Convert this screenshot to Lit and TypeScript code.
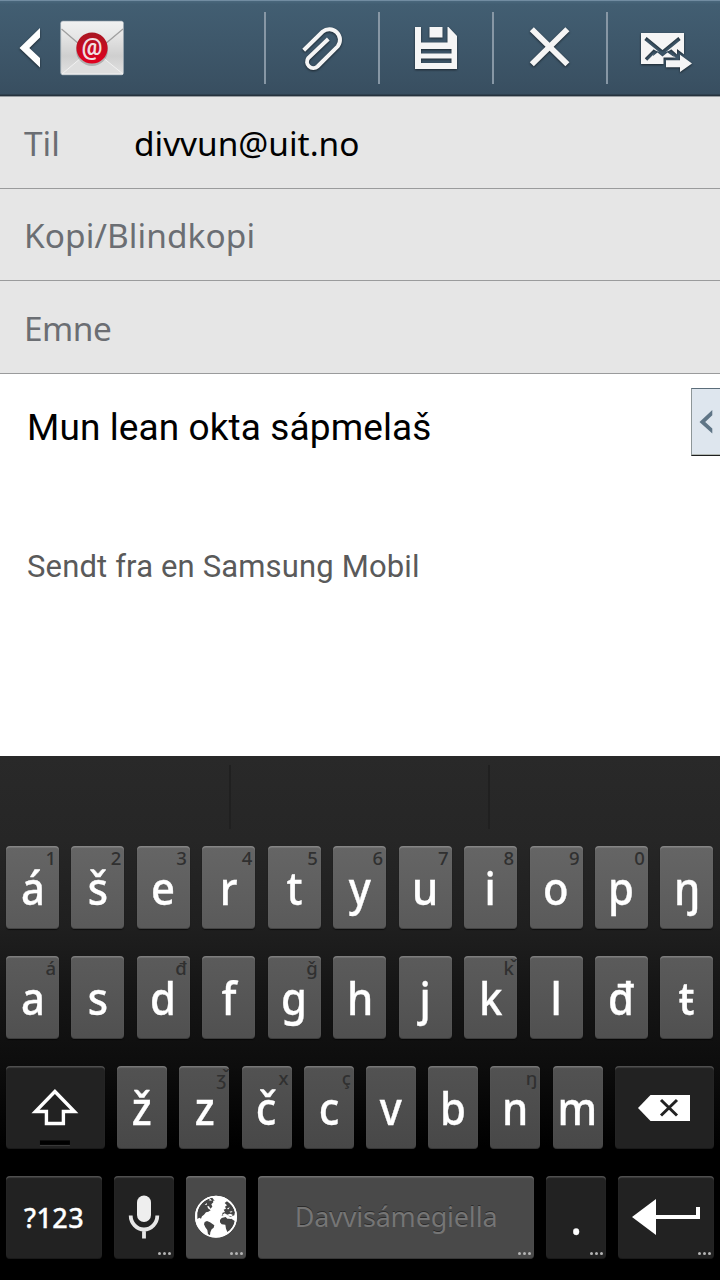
import { LitElement, html, css } from "lit";
import { customElement, property } from "lit/decorators.js";

@customElement("mail-header")
class MailHeader extends LitElement {
  static styles = css`
    :host {
      display: flex;
      box-sizing: border-box;
      height: 97px;
      border-top: 1px solid #718ca1;
      border-bottom: 1px solid #979ca0;
      background: linear-gradient(#4a687d 0, #425e72 3px, #3a5163 80px, #384e60 93px, #26323d 94px, #26323d 95px);
    }
    .home {
      width: 264px;
      flex: none;
    }
    .action {
      flex: none;
      display: flex;
      width: 114px;
      padding-top: 11px;
    }
    .action::before {
      content: "";
      width: 2px;
      height: 72px;
      background: #8797a5;
    }
    svg {
      display: block;
    }
    .action svg {
      margin-top: -12px;
    }
    .action svg,
    .chev {
      filter: drop-shadow(0 1px 1px rgba(0, 0, 0, 0.55));
    }
    .at {
      font: 700 23px Roboto, sans-serif;
    }
  `;
  render() {
    return html`
      <div class="home">
        <svg width="264" height="94" viewBox="0 1 264 94">
          <defs>
            <linearGradient id="paper" x1="0" y1="0" x2="0" y2="1">
              <stop offset="0" stop-color="#f4f4f4" />
              <stop offset=".65" stop-color="#cfcfcf" />
              <stop offset="1" stop-color="#e2e2e2" />
            </linearGradient>
            <linearGradient id="flap" x1="0" y1="0" x2="0" y2="1">
              <stop offset="0" stop-color="#f0f1f1" />
              <stop offset="1" stop-color="#dcdcdc" />
            </linearGradient>
            <linearGradient id="seal" x1="0" y1="0" x2="0" y2="1">
              <stop offset="0" stop-color="#a81722" />
              <stop offset="1" stop-color="#e3001f" />
            </linearGradient>
          </defs>
          <path class="chev" d="M19.5 48 40 28V37.5L29.3 48 40 58V67.5Z" fill="#fff" />
          <rect x="60.7" y="21.2" width="62.8" height="53.6" rx="2" fill="url(#paper)" stroke="#9aa7b1" stroke-width=".8" />
          <path d="M62 74 88 52h8l27 22z" fill="#dedede" stroke="#f2f2f2" stroke-width="1" />
          <path d="M61.5 29 88 51h8l27-22V23q0-1.5-1.5-1.5H63q-1.5 0-1.5 1.5z" fill="url(#flap)" />
          <path d="M61.5 29 86 50M123 29 98 50" stroke="#a0a0a0" stroke-width="1.3" fill="none" />
          <circle cx="92" cy="50" r="16" fill="#000" opacity=".2" />
          <circle cx="92" cy="48" r="15.6" fill="url(#seal)" />
          <text class="at" x="92" y="54.5" text-anchor="middle" fill="#f1dfe1">@</text>
        </svg>
      </div>
      <div class="action">
        <svg width="112" height="94" viewBox="266 0 112 94">
          <path
            d="M303.7 50.3 322.5 31.8A10.6 10.6 0 0 1 337.8 46.3L317.5 66.5A6.3 6.3 0 0 1 308.3 58L328.3 39"
            fill="none" stroke="#f5f5f5" stroke-width="4"
          />
        </svg>
      </div>
      <div class="action">
        <svg width="112" height="94" viewBox="380 0 112 94">
          <path fill="#f5f5f5" fill-rule="evenodd"
            d="M415 27h6v15.5h26.5V27h1L457 36v33h-42zM421 49v4.5h30.5V49zM421 58.5V63h30.5V58.5z" />
          <rect x="429.5" y="27" width="13" height="10.5" fill="#f5f5f5" />
        </svg>
      </div>
      <div class="action">
        <svg width="112" height="94" viewBox="494 0 112 94">
          <path d="M531.8 29.2 567.4 64.2M567.4 29.2 531.8 64.2" stroke="#f5f5f5" stroke-width="5.8" />
        </svg>
      </div>
      <div class="action">
        <svg width="112" height="94" viewBox="608 0 112 94">
          <mask id="cut" maskUnits="userSpaceOnUse" x="636" y="28" width="60" height="50">
            <path d="M641 33h43v31h-43z" fill="#fff" />
            <path d="M645.5 38.5 662.5 52.5 679.5 38.5" fill="none" stroke="#000" stroke-width="3.6" />
            <path d="M646 59.5 655 50.5" fill="none" stroke="#000" stroke-width="3.4" />
            <path d="M679 58.5 670 50.5" fill="none" stroke="#000" stroke-width="3.4" />
            <path d="M654 50 662.5 53 671 50 674 57 667.5 52.5 662.5 56.5 657.5 52.5 653 56z" fill="#000" />
            <path d="M663.5 57.5H677V49L696 63.5 677 78V69.5H663.5z" fill="#000" />
          </mask>
          <rect x="641" y="33" width="43" height="31" fill="#f5f5f5" mask="url(#cut)" />
          <path d="M666 60.2h14v-5.4L692 63.5 680 72V67.2H666z" fill="#f5f5f5" />
        </svg>
      </div>
    `;
  }
}

@customElement("mail-form")
class MailForm extends LitElement {
  static styles = css`
    :host {
      display: block;
      height: 659px;
      background: #fff;
      color: #000;
    }
    .field {
      box-sizing: border-box;
      height: 92px;
      padding: 1px 0 0 24px;
      display: flex;
      align-items: center;
      background: #e6e6e6;
      border-bottom: 1px solid #9a9b9c;
      font: 400 33.4px/50px "Noto Sans", sans-serif;
      color: #6b6e73;
    }
    .field.last {
      height: 93px;
      padding-top: 1px;
      letter-spacing: -0.5px;
    }
    .wide {
      letter-spacing: 0.1px;
    }
    .til {
      width: 110px;
    }
    .value {
      color: #000;
    }
    .main {
      display: flex;
      justify-content: space-between;
      align-items: flex-start;
      padding: 14px 0 0 27px;
      height: 382px;
      box-sizing: border-box;
      font-family: Roboto, sans-serif;
    }
    .body {
      margin: 0;
      padding-top: 17px;
      font-size: 37px;
      line-height: 46px;
      letter-spacing: 0.1px;
    }
    .sign {
      margin: 96px 0 0;
      font-size: 31px;
      line-height: 40px;
      letter-spacing: 0.15px;
      color: #5a5a5a;
    }
    .handle {
      box-sizing: border-box;
      width: 29px;
      height: 68px;
      background: #dee6ee;
      border-top: 1px solid #5b6d7a;
      border-left: 1px solid #8d9698;
      border-bottom: 1px solid #1d1f20;
      box-shadow: inset 0 -1px 0 #b3b9b4;
    }
  `;
  render() {
    return html`
      <div class="field"><span class="til">Til</span><span class="value">divvun@uit.no</span></div>
      <div class="field"><span class="wide">Kopi/Blindkopi</span></div>
      <div class="field last"><span>Emne</span></div>
      <div class="main">
        <div>
          <p class="body">Mun lean okta sápmelaš</p>
          <p class="sign">Sendt fra en Samsung Mobil</p>
        </div>
        <div class="handle">
          <svg width="28" height="66" viewBox="0 0 28 66">
            <path d="M7.5 33 20.3 21V26.3L13.2 33 20.3 39.5V44.5z" fill="#5f7586" />
          </svg>
        </div>
      </div>
    `;
  }
}

@customElement("kb-key")
class KbKey extends LitElement {
  @property() label = "";
  @property() hint = "";
  @property({ type: Boolean }) more = false;
  static styles = css`
    :host {
      box-sizing: border-box;
      position: relative;
      display: flex;
      justify-content: center;
      height: 83px;
      flex: none;
      border-radius: 4px;
      background: var(--key, #4b4b4b);
      box-shadow: inset 0 2px 1px -0.5px rgba(255, 255, 255, 0.22), inset 0 -1px 0 rgba(0, 0, 0, 0.25),
        0 1px 1px rgba(0, 0, 0, 0.6);
      color: #fff;
      font-family: "Noto Sans", sans-serif;
    }
    .label {
      font-size: 45px;
      line-height: 83px;
      font-weight: 500;
      white-space: nowrap;
      transform: scaleX(0.93);
      -webkit-text-stroke: 0.35px #fff;
    }
    .hint {
      position: absolute;
      right: 3px;
      top: 0;
      font-size: 18.5px;
      line-height: 23px;
      font-weight: 500;
      color: #303030;
    }
    .mark {
      position: relative;
      top: -2px;
      display: inline-block;
      margin: 0 -4px 0 -4px;
      line-height: 0;
    }
    .dots {
      position: absolute;
      right: 3px;
      bottom: 4px;
      display: flex;
      gap: 2px;
    }
    .dots i {
      width: 3px;
      height: 3px;
      border-radius: 50%;
      background: #b4b4b4;
    }
  `;
  glyph(text: string) {
    return text.endsWith("ˇ") ? html`${text.slice(0, -1)}<span class="mark">ˇ</span>` : text;
  }
  render() {
    return html`
      ${this.label ? html`<span class="label">${this.label}</span>` : html`<slot></slot>`}
      ${this.hint ? html`<span class="hint">${this.glyph(this.hint)}</span>` : ""}
      ${this.more ? html`<span class="dots"><i></i><i></i><i></i></span>` : ""}
    `;
  }
}

const ROW1 = [["á", "1"], ["š", "2"], ["e", "3"], ["r", "4"], ["t", "5"], ["y", "6"], ["u", "7"], ["i", "8"], ["o", "9"], ["p", "0"], ["ŋ", ""]];
const ROW2 = [["a", "á"], ["s", ""], ["d", "đ"], ["f", ""], ["g", "ǧ"], ["h", ""], ["j", ""], ["k", "kˇ"], ["l", ""], ["đ", ""], ["ŧ", ""]];
const ROW3 = [["ž", ""], ["z", "ʒˇ"], ["č", "x"], ["c", "ç"], ["v", ""], ["b", ""], ["n", "ŋ"], ["m", ""]];

@customElement("soft-keyboard")
class SoftKeyboard extends LitElement {
  static styles = css`
    :host {
      display: block;
      height: 524px;
      background: linear-gradient(#292929 0, #262626 84px, #1f1f1f 170px, #161616 230px, #0d0d0d 310px, #000 390px);
      color: #fff;
      font-family: "Noto Sans", sans-serif;
    }
    .suggest {
      display: flex;
      padding-top: 9px;
      height: 81px;
    }
    .suggest div {
      width: 229px;
      height: 64px;
      border-right: 2px solid #202020;
    }
    .suggest div + div {
      width: 257px;
    }
    .suggest div:last-child {
      border: 0;
      width: auto;
    }
    .row {
      display: flex;
      height: 110px;
      padding-left: 6px;
    }
    .r1,
    .r2 {
      gap: 12.44px;
    }
    .r1 kb-key,
    .r2 kb-key {
      width: 53px;
    }
    .r1 {
      --key: linear-gradient(#656565, #5a5a5a);
    }
    .r2 {
      --key: linear-gradient(#5b5b5b, #505050);
    }
    .r3 {
      --key: linear-gradient(#525252, #484848);
      gap: 12.24px;
    }
    .r3 kb-key {
      width: 50px;
    }
    .r3 .shift {
      width: 98.83px;
    }
    .r3 .del {
      width: 99px;
    }
    .r4 {
      --key: #494949;
      gap: 12px;
    }
    .r4 kb-key {
      width: 60px;
    }
    .r4 .wide {
      width: 96px;
    }
    .r4 .space {
      width: 276px;
    }
    .fn {
      --key: #222;
    }
    .sym {
      font-size: 27px;
      font-weight: 500;
      line-height: 84px;
      letter-spacing: 0.4px;
      -webkit-text-stroke: 0.3px #fff;
    }
    .lang {
      font-size: 27px;
      line-height: 82px;
      letter-spacing: -0.2px;
      color: #757575;
      text-shadow: 0 -1px 0 #2c2c2c;
    }
    svg {
      display: block;
    }
  `;
  row(keys: string[][]) {
    return keys.map(([l, h]) => html`<kb-key .label=${l} .hint=${h}></kb-key>`);
  }
  render() {
    return html`
      <div class="suggest"><div></div><div></div><div></div></div>
      <div class="row r1">${this.row(ROW1)}</div>
      <div class="row r2">${this.row(ROW2)}</div>
      <div class="row r3">
        <kb-key class="fn shift">
          <svg width="99" height="83" viewBox="6 1066 99 83">
            <path d="M55 1091.5 35.5 1111.5H46.5V1123.5H63.5V1111.5H74.5Z" fill="none" stroke="#fff" stroke-width="3.4" />
            <rect x="40" y="1140.5" width="30" height="4.5" fill="#000" />
            <rect x="40" y="1145" width="30" height="1" fill="#3a3a3a" />
          </svg>
        </kb-key>
        ${this.row(ROW3)}
        <kb-key class="fn del">
          <svg width="99" height="83" viewBox="615 1066 99 83">
            <path d="M638 1108 650.5 1095H690V1121H650.5Z" fill="#fff" />
            <path d="M661 1100 677 1115.5M677 1100 661 1115.5" stroke="#222" stroke-width="3" />
          </svg>
        </kb-key>
      </div>
      <div class="row r4">
        <kb-key class="fn wide"><span class="sym">?123</span></kb-key>
        <kb-key class="fn" more>
          <svg width="60" height="83" viewBox="114 1176 60 83">
            <rect x="137" y="1195.5" width="14" height="26.5" rx="7" fill="#eee" />
            <path d="M130.7 1215.5A13.3 14 0 0 0 157.3 1215.5M144 1228V1238.5" fill="none" stroke="#e6e6e6" stroke-width="3.8" />
          </svg>
        </kb-key>
        <kb-key more>
          <svg width="60" height="83" viewBox="186 1176 60 83">
            <g transform="translate(190 1190) scale(.33333)">
              <circle cx="78" cy="80" r="60.5" fill="#fff" stroke="#fff" stroke-width="5" />
              <g fill="#444">
                <path d="M22 68Q26 46 42 34L54 27 61 26 56 31 64 32 68 28 70 37 64 43 67 50 61 56 57 49 52 48 54 55 62 61 55 65 48 67 42 74 36 79 33 86 28 83 22 87Z" />
                <path d="M58 24 67 23 74 33 65 31Z" />
                <path d="M44 96 51 93 60 97 73 106 71 113 65 118 61 127 60 136 54 133 52 120 46 112 42 103 Z" />
                <path d="M90 90 95 84 107 81 112 86 124 86 134 93Q132 109 120 121L112 126 108 116 106 104 95 103 90 97Z" />
                <path d="M95 77 98 68 105 66 101 59 108 56 105 50 111 46 104 39 111 34Q130 46 135 66L133 76 122 80 110 76Z" />
              </g>
              <path d="M96 75 104 70 112 74 120 71 128 74 126 79 114 77 106 80ZM117 84 124 82 122 87ZM44 44 51 39 50 45ZM110 57 119 51 116 58ZM118 65 128 63 123 68Z" fill="#fff" />
              <circle cx="78" cy="80" r="60.5" fill="none" stroke="#fff" stroke-width="4.5" />
            </g>
          </svg>
        </kb-key>
        <kb-key class="space" more><span class="lang">Davvisámegiella</span></kb-key>
        <kb-key class="fn" more label="."></kb-key>
        <kb-key class="fn wide" more>
          <svg width="96" height="83" viewBox="618 1176 96 83">
            <path d="M632 1217 656 1199V1215H696V1207H700V1219H656V1235Z" fill="#fff" />
          </svg>
        </kb-key>
      </div>
    `;
  }
}

@customElement("app-root")
class AppRoot extends LitElement {
  static styles = css`
    :host {
      display: block;
      width: 720px;
      height: 1280px;
      overflow: hidden;
    }
  `;
  render() {
    return html`<mail-header></mail-header><mail-form></mail-form><soft-keyboard></soft-keyboard>`;
  }
}
